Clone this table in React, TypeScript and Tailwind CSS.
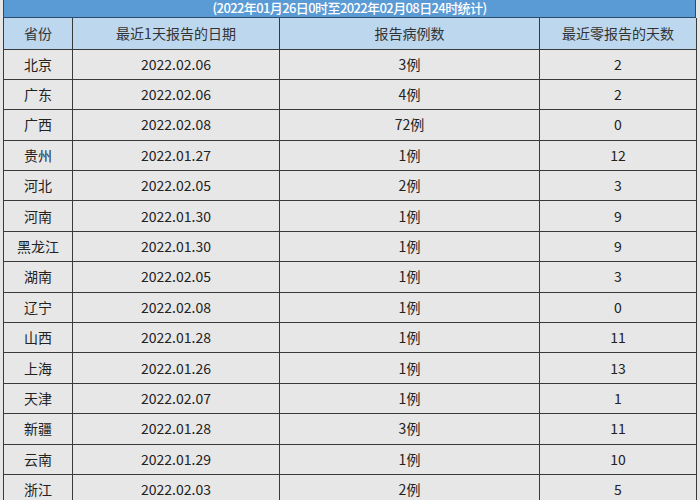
import React from "react";

type Row = { province: string; date: string; cases: string; days: number };

const rows: Row[] = [
  { province: "北京", date: "2022.02.06", cases: "3例", days: 2 },
  { province: "广东", date: "2022.02.06", cases: "4例", days: 2 },
  { province: "广西", date: "2022.02.08", cases: "72例", days: 0 },
  { province: "贵州", date: "2022.01.27", cases: "1例", days: 12 },
  { province: "河北", date: "2022.02.05", cases: "2例", days: 3 },
  { province: "河南", date: "2022.01.30", cases: "1例", days: 9 },
  { province: "黑龙江", date: "2022.01.30", cases: "1例", days: 9 },
  { province: "湖南", date: "2022.02.05", cases: "1例", days: 3 },
  { province: "辽宁", date: "2022.02.08", cases: "1例", days: 0 },
  { province: "山西", date: "2022.01.28", cases: "1例", days: 11 },
  { province: "上海", date: "2022.01.26", cases: "1例", days: 13 },
  { province: "天津", date: "2022.02.07", cases: "1例", days: 1 },
  { province: "新疆", date: "2022.01.28", cases: "3例", days: 11 },
  { province: "云南", date: "2022.01.29", cases: "1例", days: 10 },
  { province: "浙江", date: "2022.02.03", cases: "2例", days: 5 },
];

const cell = "border border-[#3a3a3a] text-center align-middle p-0";

export default function App() {
  return (
    <div
      className="h-[500px] w-[700px] overflow-hidden bg-[#e6e6e6] pl-[3px]"
      style={{ fontFamily: '"Noto Sans CJK SC", "Noto Sans", sans-serif' }}
    >
      <div className="w-[693px]">
        <div className="flex h-[18px] items-center justify-center border-x border-b border-[#2c4a6a] bg-[#5b9bd5]">
          <span className="-mt-[3px] text-[13px] font-medium leading-none tracking-[-0.6px] text-white">
            (2022年01月26日0时至2022年02月08日24时统计)
          </span>
        </div>
        <table className="w-[693px] table-fixed border-collapse text-[14px] text-[#222]">
          <colgroup>
            <col className="w-[69px]" />
            <col className="w-[207px]" />
            <col className="w-[260px]" />
            <col className="w-[157px]" />
          </colgroup>
          <thead>
            <tr className="h-[31px] bg-[#bdd7ee] text-[#333]">
              <th className={`${cell} border-t-0 font-normal`}>省份</th>
              <th className={`${cell} border-t-0 font-normal`}>最近1天报告的日期</th>
              <th className={`${cell} border-t-0 font-normal`}>报告病例数</th>
              <th className={`${cell} border-t-0 font-normal`}>最近零报告的天数</th>
            </tr>
          </thead>
          <tbody>
            {rows.map((r) => (
              <tr key={r.province} className="h-[30.4px] bg-[#e7e7e7]">
                <td className={cell}>{r.province}</td>
                <td className={cell}>{r.date}</td>
                <td className={cell}>{r.cases}</td>
                <td className={cell}>{r.days}</td>
              </tr>
            ))}
          </tbody>
        </table>
      </div>
    </div>
  );
}
